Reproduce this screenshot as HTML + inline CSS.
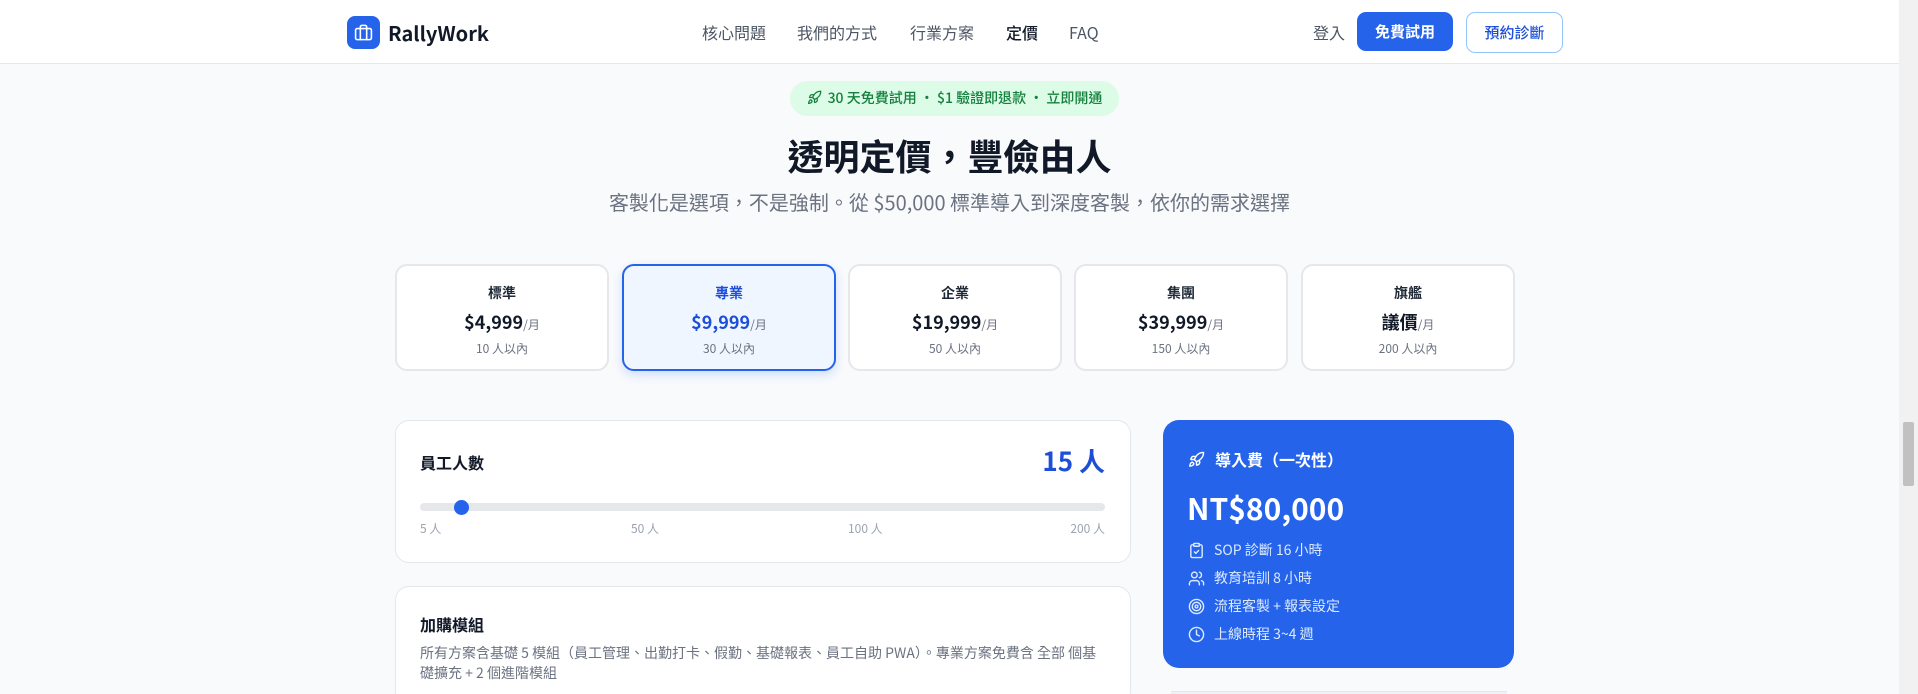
<!DOCTYPE html>
<html><head><meta charset="utf-8"><style>
*{box-sizing:border-box;margin:0;padding:0}
html{width:1918px;height:694px;overflow:hidden}
body{width:1918px;height:694px;overflow:hidden;background:#f8fafc;font-family:"Noto Sans CJK TC","Liberation Sans",sans-serif;color:#111827;position:relative}
.abs{position:absolute}
.hdr{left:0;top:0;width:1899px;height:64px;background:#fff;border-bottom:1px solid #e5e7eb}
.nav{top:21px;font-size:16px;color:#4b5563;line-height:22px}
.sb{left:1899px;top:0;width:19px;height:694px;background:#f1f1f1}
.thumb{left:1903px;top:422px;width:11px;height:64px;background:#c1c1c1;border-radius:2px}
.card{background:#fff;border:2px solid #e5e7eb;border-radius:12px;text-align:center;top:264px;width:214px;height:107px}
.card .n{margin-top:17px;font-size:14px;font-weight:700;line-height:20px;color:#1f2937}
.card .p{margin-top:6px;font-size:18px;font-weight:700;line-height:26px}
.card .p small{font-size:12px;font-weight:400;color:#6b7280}
.card .c{margin-top:3px;font-size:12px;color:#6b7280;line-height:16px}
.sel{background:#eff6ff;border-color:#2563eb;box-shadow:0 4px 10px rgba(37,99,235,.18)}
.sel .n,.sel .p{color:#1d4ed8}
.panel{background:#fff;border:1px solid #e5e7eb;border-radius:14px}
.lbl{font-size:12px;color:#9ca3af;top:521px;line-height:16px}
.li{left:1188px;font-size:14px;color:#dbeafe;line-height:20px;display:flex;align-items:center;gap:9px}
.li svg{width:17px;height:17px}
</style></head><body>
<div class="abs hdr"></div>
<div class="abs" style="left:347px;top:16px;width:33px;height:33px;background:#2563eb;border-radius:8px;display:flex;align-items:center;justify-content:center">
<svg width="19" height="19" viewBox="0 0 24 24" fill="none" stroke="#fff" stroke-width="2" stroke-linecap="round" stroke-linejoin="round"><rect x="2" y="7" width="20" height="14" rx="2"/><path d="M16 21V5a2 2 0 0 0-2-2h-4a2 2 0 0 0-2 2v16"/></svg></div>
<div class="abs" style="left:388px;top:19px;font-size:20px;font-weight:700;line-height:28px;color:#111827">RallyWork</div>
<div class="abs nav" style="left:702px">核心問題</div>
<div class="abs nav" style="left:797px">我們的方式</div>
<div class="abs nav" style="left:910px">行業方案</div>
<div class="abs nav" style="left:1006px;color:#111827;font-weight:500">定價</div>
<div class="abs nav" style="left:1069px">FAQ</div>
<div class="abs nav" style="left:1313px">登入</div>
<div class="abs" style="left:1357px;top:12px;width:96px;height:39px;background:#2563eb;border-radius:9px;color:#fff;font-size:15px;font-weight:700;line-height:39px;text-align:center">免費試用</div>
<div class="abs" style="left:1466px;top:12px;width:97px;height:41px;border:1px solid #93c5fd;border-radius:9px;color:#1d4ed8;font-size:15px;font-weight:500;line-height:39px;text-align:center;background:#fff">預約診斷</div>
<div class="abs sb"></div><div class="abs thumb"></div>

<div class="abs" style="left:790px;top:81px;width:329px;height:35px;background:#dcfce7;border-radius:18px;color:#15803d;font-size:14px;font-weight:500;line-height:35px;text-align:center">
<svg width="15" height="15" viewBox="0 0 24 24" fill="none" stroke="#15803d" stroke-width="2" stroke-linecap="round" stroke-linejoin="round" style="vertical-align:-2px;margin-right:6px"><path d="M4.5 16.5c-1.5 1.26-2 5-2 5s3.74-.5 5-2c.71-.84.7-2.13-.09-2.91a2.18 2.18 0 0 0-2.91-.09z"/><path d="m12 15-3-3a22 22 0 0 1 2-3.95A12.88 12.88 0 0 1 22 2c0 2.72-.78 7.5-6 11a22.35 22.35 0 0 1-4 2z"/><path d="M9 12H4s.55-3.03 2-4c1.62-1.08 5 0 5 0"/><path d="M12 15v5s3.03-.55 4-2c1.08-1.62 0-5 0-5"/></svg>30 天免費試用 · $1 驗證即退款 · 立即開通</div>
<div class="abs" style="left:0;width:1899px;top:132px;text-align:center;font-size:36px;font-weight:700;line-height:46px;color:#111827">透明定價，豐儉由人</div>
<div class="abs" style="left:0;width:1899px;top:188px;text-align:center;font-size:20px;line-height:28px;color:#6b7280">客製化是選項，不是強制。從 $50,000 標準導入到深度客製，依你的需求選擇</div>

<div class="abs card" style="left:395px"><div class="n">標準</div><div class="p">$4,999<small>/月</small></div><div class="c">10 人以內</div></div>
<div class="abs card sel" style="left:622px"><div class="n">專業</div><div class="p">$9,999<small>/月</small></div><div class="c">30 人以內</div></div>
<div class="abs card" style="left:848px"><div class="n">企業</div><div class="p">$19,999<small>/月</small></div><div class="c">50 人以內</div></div>
<div class="abs card" style="left:1074px"><div class="n">集團</div><div class="p">$39,999<small>/月</small></div><div class="c">150 人以內</div></div>
<div class="abs card" style="left:1301px"><div class="n">旗艦</div><div class="p">議價<small>/月</small></div><div class="c">200 人以內</div></div>

<div class="abs panel" style="left:395px;top:420px;width:736px;height:143px"></div>
<div class="abs" style="left:420px;top:450px;font-size:16px;font-weight:700;line-height:24px">員工人數</div>
<div class="abs" style="left:1000px;width:105px;text-align:right;top:444px;font-size:26px;font-weight:700;line-height:34px;color:#1d4ed8">15 人</div>
<div class="abs" style="left:420px;top:503px;width:685px;height:8px;background:#e5e7eb;border-radius:4px"></div>
<div class="abs" style="left:454px;top:500px;width:15px;height:15px;background:#2563eb;border-radius:50%"></div>
<div class="abs lbl" style="left:420px">5 人</div>
<div class="abs lbl" style="left:631px">50 人</div>
<div class="abs lbl" style="left:848px">100 人</div>
<div class="abs lbl" style="left:1070px;width:35px;text-align:right">200 人</div>

<div class="abs panel" style="left:395px;top:586px;width:736px;height:120px"></div>
<div class="abs" style="left:420px;top:612px;font-size:16px;font-weight:700;line-height:24px">加購模組</div>
<div class="abs" style="left:420px;top:643px;width:690px;font-size:14px;line-height:20px;color:#6b7280">所有方案含基礎 5 模組（員工管理、出勤打卡、假勤、基礎報表、員工自助 PWA）。專業方案免費含 全部 個基礎擴充 + 2 個進階模組</div>

<div class="abs" style="left:1163px;top:420px;width:351px;height:248px;background:#2563eb;border-radius:16px"></div>
<div class="abs" style="left:1188px;top:447px;display:flex;align-items:center;gap:10px;color:#fff;font-size:16px;font-weight:700;line-height:24px">
<svg width="17" height="17" viewBox="0 0 24 24" fill="none" stroke="#fff" stroke-width="2" stroke-linecap="round" stroke-linejoin="round"><path d="M4.5 16.5c-1.5 1.26-2 5-2 5s3.74-.5 5-2c.71-.84.7-2.13-.09-2.91a2.18 2.18 0 0 0-2.91-.09z"/><path d="m12 15-3-3a22 22 0 0 1 2-3.950A12.88 12.88 0 0 1 22 2c0 2.72-.78 7.5-6 11a22.35 22.35 0 0 1-4 2z"/><path d="M9 12H4s.55-3.03 2-4c1.620-1.08 5 0 5 0"/><path d="M12 15v5s3.03-.55 4-2c1.08-1.62 0-5 0-5"/></svg>導入費（一次性）</div>
<div class="abs" style="left:1187px;top:486px;color:#fff;font-size:30px;font-weight:700;line-height:42px">NT$80,000</div>
<div class="abs li" style="top:540px"><svg viewBox="0 0 24 24" fill="none" stroke="#dbeafe" stroke-width="2" stroke-linecap="round" stroke-linejoin="round"><rect x="8" y="2" width="8" height="4" rx="1"/><path d="M16 4h2a2 2 0 0 1 2 2v14a2 2 0 0 1-2 2H6a2 2 0 0 1-2-2V6a2 2 0 0 1 2-2h2"/><path d="m9 14 2 2 4-4"/></svg>SOP 診斷 16 小時</div>
<div class="abs li" style="top:568px"><svg viewBox="0 0 24 24" fill="none" stroke="#dbeafe" stroke-width="2" stroke-linecap="round" stroke-linejoin="round"><path d="M16 21v-2a4 4 0 0 0-4-4H6a4 4 0 0 0-4 4v2"/><circle cx="9" cy="7" r="4"/><path d="M22 21v-2a4 4 0 0 0-3-3.87"/><path d="M16 3.13a4 4 0 0 1 0 7.75"/></svg>教育培訓 8 小時</div>
<div class="abs li" style="top:596px"><svg viewBox="0 0 24 24" fill="none" stroke="#dbeafe" stroke-width="2"><circle cx="12" cy="12" r="10"/><circle cx="12" cy="12" r="6"/><circle cx="12" cy="12" r="2"/></svg>流程客製 + 報表設定</div>
<div class="abs li" style="top:624px"><svg viewBox="0 0 24 24" fill="none" stroke="#dbeafe" stroke-width="2" stroke-linecap="round"><circle cx="12" cy="12" r="10"/><path d="M12 6v6l4 2"/></svg>上線時程 3~4 週</div>
<div class="abs" style="left:1171px;top:691px;width:336px;height:3px;background:#eef2f6;border-top:1px solid #e5e7eb"></div>
</body></html>
